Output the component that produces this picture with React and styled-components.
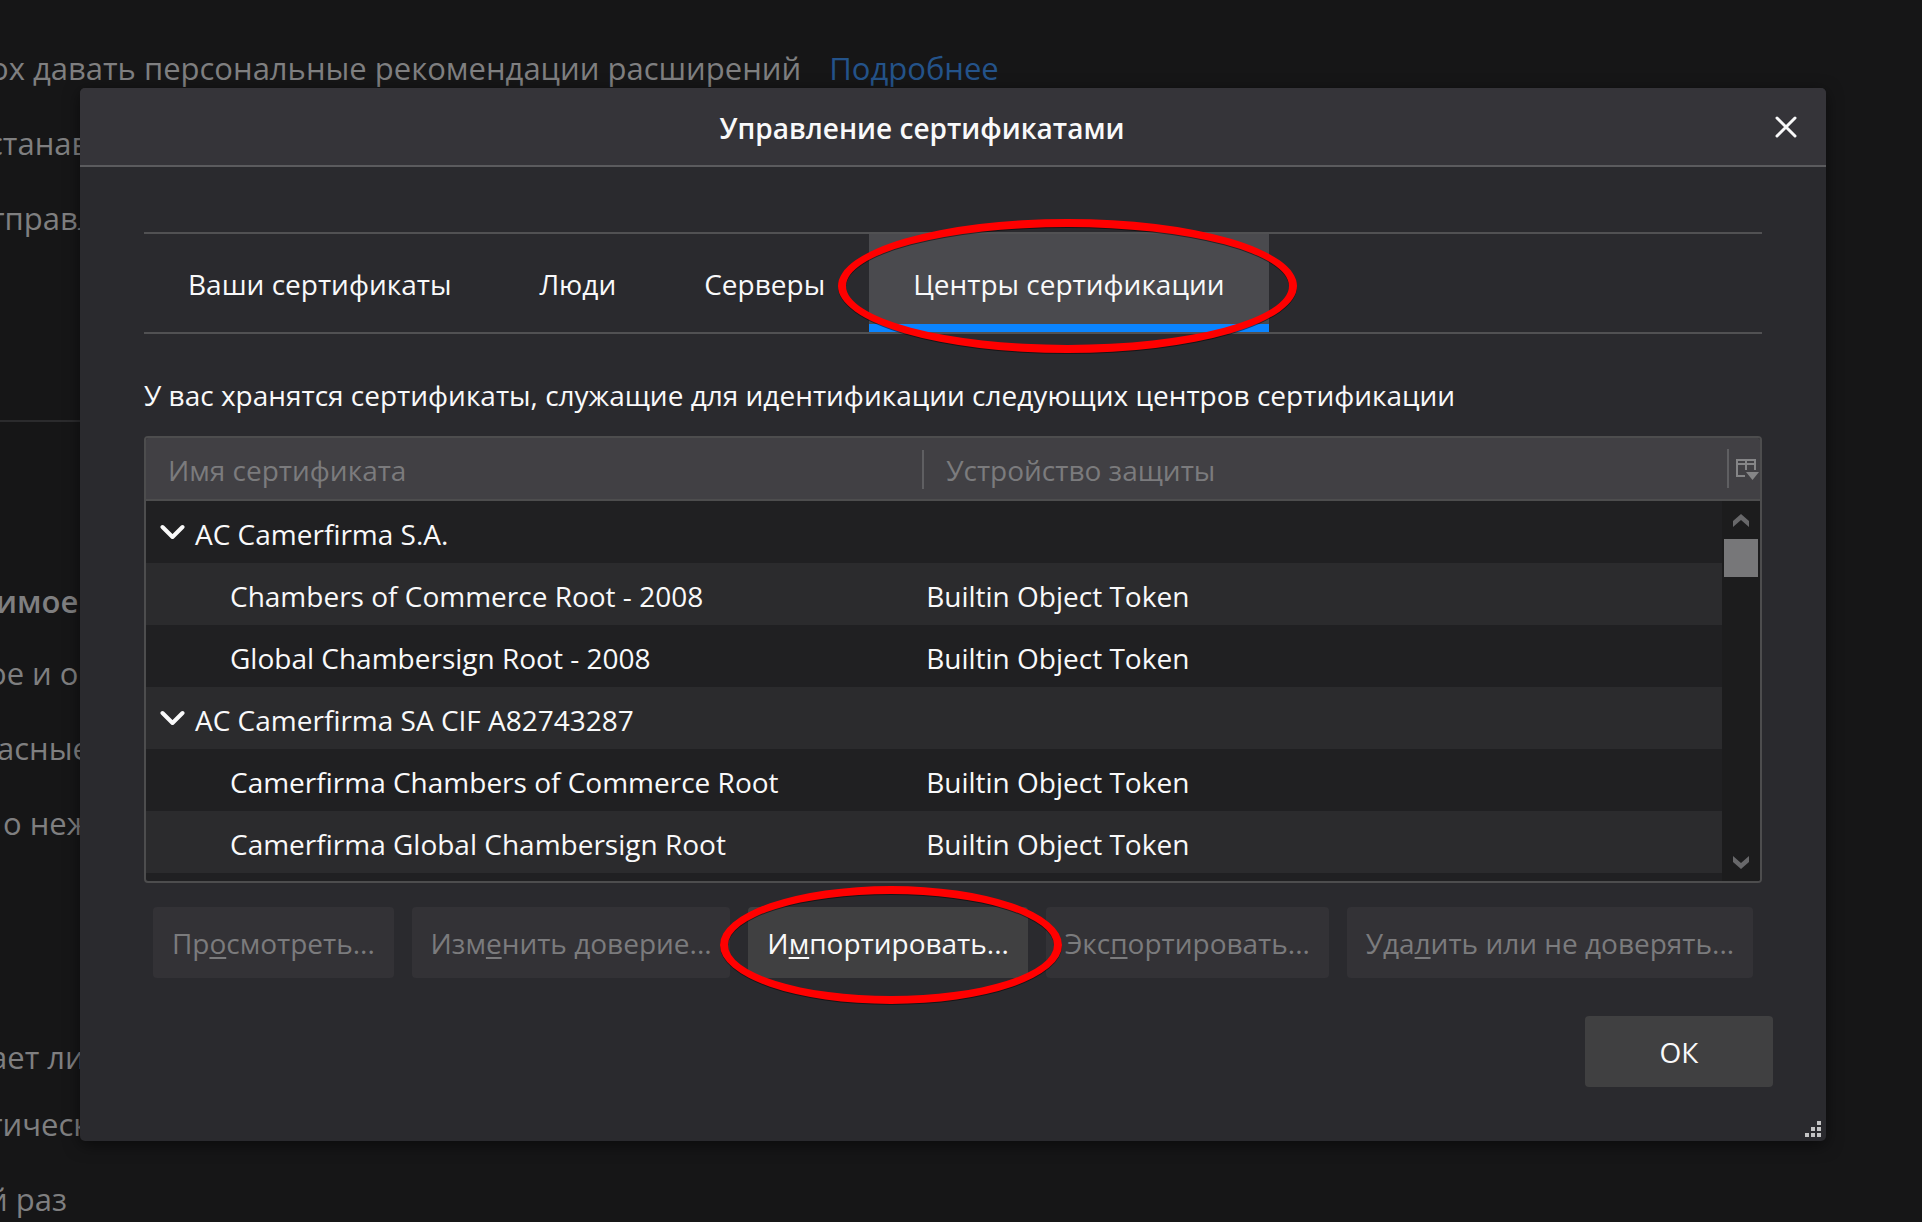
import React from "react";
import styled, { createGlobalStyle, css } from "styled-components";

const GlobalStyle = createGlobalStyle`
  *, *::before, *::after { box-sizing: border-box; }
  body {
    margin: 0;
    background: #161617;
    color: #f9f9fa;
    font: 28px/40px "Segoe UI", "Open Sans", "Noto Sans", sans-serif;
  }
  button { font: inherit; color: inherit; border: 0; padding: 0; background: none; }
`;

const Screen = styled.div`
  display: grid;
  min-height: 100vh;
  overflow: hidden;
`;

/* Preferences page, scrolled sideways behind the dialog */
const Backdrop = styled.div`
  grid-area: 1 / 1;
  width: 90%;
  height: 100vh;
  overflow: hidden;
  padding-top: 45px;
  color: #7f7f80;
  font-size: 31px;
  line-height: 47px;
  white-space: nowrap;
`;

const Group = styled.section`
  display: flex;
  flex-direction: column;
  gap: 28px;
  padding-bottom: ${(p) => p.$after}px;
`;

const Line = styled.p`
  margin: 0;
  margin-left: ${(p) => p.$start}px;
`;

const Heading = styled.h2`
  margin: 0 0 -3px -4px;
  font-size: 31px;
  font-weight: 600;
  line-height: 47px;
`;

const Rule = styled.hr`
  margin: 0 0 156px;
  border: 0;
  border-top: 2px solid #2b2b2d;
`;

const MoreLink = styled.a`
  margin-left: 28px;
  color: #24538a;
  text-decoration: none;
`;

const Overlay = styled.div`
  grid-area: 1 / 1;
  z-index: 1;
  padding: 88px 96px 81px 80px;
`;

const Dialog = styled.section`
  display: flex;
  flex-direction: column;
  border-radius: 5px;
  background: #2a2a2e;
  box-shadow: 0 4px 16px rgba(0, 0, 0, 0.5);
`;

const TitleBar = styled.header`
  display: flex;
  align-items: center;
  height: 79px;
  padding-right: 18px;
  border-bottom: 2px solid #5b5b5e;
  border-radius: 5px 5px 0 0;
  background: #353439;
`;

const Title = styled.h1`
  flex: 1;
  margin: 0;
  padding-top: 2px;
  font-size: 28px;
  font-weight: 600;
  line-height: 40px;
  text-align: center;
`;

const CloseButton = styled.button`
  display: grid;
  place-items: center;
  width: 44px;
  height: 44px;
`;

const Content = styled.div`
  padding: 65px 64px 0;
`;

const TabList = styled.div`
  display: flex;
  border: solid #515153;
  border-width: 2px 0;
`;

const Tab = styled.button`
  position: relative;
  height: 98px;
  padding: 10px 44px 0;
  border-bottom: 8px solid transparent;
  ${(p) => p.$selected && css`
    background: #4a4a4e;
    border-bottom-color: #0a84ff;
  `}
`;

const Mark = styled.span`
  position: absolute;
  z-index: 2;
  inset: ${(p) => p.$inset};
  border: 8px solid #ff0000;
  border-radius: 50%;
  filter: drop-shadow(0 1px 0 rgba(0, 0, 0, 0.5));
  pointer-events: none;
`;

const Description = styled.p`
  margin: 41px 0 21px;
`;

const Tree = styled.div`
  display: grid;
  grid-template-columns: 1fr 38px;
  height: 447px;
  overflow: hidden;
  border: 2px solid #4d4d4e;
  border-radius: 4px;
  background: #202022;
`;

const Table = styled.table`
  width: 100%;
  table-layout: fixed;
  border-collapse: separate;
  border-spacing: 0;
  align-self: start;
`;

const headerSurface = css`
  height: 63px;
  border-bottom: 2px solid #4d4d4e;
  background: #414044;
  color: #7b7b7d;
`;

const Divider = styled.span`
  width: 2px;
  height: 39px;
  background: #5f5f62;
`;

const HeadCell = styled.th`
  ${headerSurface}
  width: ${(p) => p.$width || "auto"};
  padding: 0;
  font-weight: 400;
  text-align: left;
`;

const HeadLabel = styled.span`
  display: flex;
  align-items: center;
  gap: 22px;
  padding-top: 2px;
  padding-left: ${(p) => (p.$first ? 22 : 0)}px;
`;

const Row = styled.tr`
  height: 62px;
  &:nth-child(even) { background: #2b2b2d; }
`;

const Cell = styled.td`
  padding: 4px 0 0 ${(p) => p.$indent}px;
  white-space: nowrap;
`;

const GroupName = styled.span`
  display: flex;
  align-items: center;
  gap: 10px;
`;

const Side = styled.div`
  display: flex;
  flex-direction: column;
`;

const ColumnPicker = styled.button`
  ${headerSurface}
  display: flex;
  flex: none;
  align-items: center;
  gap: 6px;
  padding-left: 5px;
`;

const ScrollBar = styled.div`
  display: flex;
  flex: 1;
  flex-direction: column;
  background: #1c1c1d;
`;

const ScrollButton = styled.button`
  display: grid;
  place-items: center;
  height: 38px;
`;

const ScrollTrack = styled.div`
  flex: 1;
  padding: 0 2px;
`;

const ScrollThumb = styled.div`
  height: 38px;
  background: #777779;
`;

const Actions = styled.div`
  display: flex;
  gap: 18px;
  padding: 24px 9px 38px;
`;

const Button = styled.button`
  position: relative;
  flex: 1 1 auto;
  height: 71px;
  border-radius: 4px;
  background: #404041;
  white-space: nowrap;
  &:disabled {
    background: #333236;
    color: #7b7b7d;
  }
`;

const Key = styled.u`
  text-decoration-thickness: 2px;
  text-underline-offset: 3px;
`;

const Footer = styled.footer`
  display: flex;
  justify-content: flex-end;
  padding-right: 53px;
`;

const OkButton = styled(Button)`
  flex: none;
  width: 188px;
`;

const GripRow = styled.div`
  display: flex;
  justify-content: flex-end;
  padding: 34px 5px 4px;
  line-height: 0;
`;

const rows = [
  { group: "AC Camerfirma S.A." },
  { name: "Chambers of Commerce Root - 2008" },
  { name: "Global Chambersign Root - 2008" },
  { group: "AC Camerfirma SA CIF A82743287" },
  { name: "Camerfirma Chambers of Commerce Root" },
  { name: "Camerfirma Global Chambersign Root" },
];

const Twisty = () => (
  <svg width="25" height="20" viewBox="0 0 25 20" fill="none" stroke="#f9f9fa" strokeWidth="4" strokeLinecap="round" strokeLinejoin="round" aria-hidden="true">
    <path d="M2.5 3 12.5 13 22.5 3" />
  </svg>
);

const ScrollArrow = ({ down }) => (
  <svg width="16" height="13" viewBox="0 0 16 13" fill="#68686a" aria-hidden="true">
    <path d={down ? "M0 0v6l8 7 8-7V0L8 7z" : "M0 13V7l8-7 8 7v6L8 6z"} />
  </svg>
);

export default function App() {
  return (
    <Screen>
      <GlobalStyle />
      <Backdrop>
        <Group $after={178}>
          <Line $start={-10}>ох давать персональные рекомендации расширений<MoreLink href="#more">Подробнее</MoreLink></Line>
          <Line $start={-12}>станав</Line>
          <Line $start={-10}>тправл</Line>
        </Group>
        <Rule />
        <Group $after={187}>
          <Heading>имое</Heading>
          <Line $start={-12}>ое и о</Line>
          <Line $start={-3}>асные</Line>
          <Line $start={3}>о неж</Line>
        </Group>
        <Group $after={20}>
          <Line $start={-10}>ает ли</Line>
        </Group>
        <Group $after={0}>
          <Line $start={-12}>тическ</Line>
          <Line $start={-12}>й раз</Line>
        </Group>
      </Backdrop>

      <Overlay>
        <Dialog role="dialog" aria-labelledby="dialog-title">
          <TitleBar>
            <Title id="dialog-title">Управление сертификатами</Title>
            <CloseButton type="button" aria-label="Закрыть">
              <svg width="22" height="22" viewBox="0 0 22 22" stroke="#f9f9fa" strokeWidth="3" strokeLinecap="round" aria-hidden="true">
                <path d="M2 2 20 20M20 2 2 20" />
              </svg>
            </CloseButton>
          </TitleBar>

          <Content>
            <TabList role="tablist">
              <Tab type="button" role="tab">Ваши сертификаты</Tab>
              <Tab type="button" role="tab">Люди</Tab>
              <Tab type="button" role="tab">Серверы</Tab>
              <Tab type="button" role="tab" aria-selected="true" $selected>
                Центры сертификации
                <Mark $inset="-15px -28px -29px -31px" />
              </Tab>
            </TabList>

            <Description>У вас хранятся сертификаты, служащие для идентификации следующих центров сертификации</Description>

            <Tree>
              <Table>
                <thead>
                  <tr>
                    <HeadCell scope="col" $width="49.25%">
                      <HeadLabel $first>Имя сертификата</HeadLabel>
                    </HeadCell>
                    <HeadCell scope="col">
                      <HeadLabel><Divider />Устройство защиты</HeadLabel>
                    </HeadCell>
                  </tr>
                </thead>
                <tbody>
                  {rows.map((r) => (
                    <Row key={r.group || r.name}>
                      <Cell $indent={r.group ? 14 : 84}>
                        {r.group ? <GroupName><Twisty />{r.group}</GroupName> : r.name}
                      </Cell>
                      <Cell $indent={4}>{r.name && "Builtin Object Token"}</Cell>
                    </Row>
                  ))}
                </tbody>
              </Table>
              <Side>
                <ColumnPicker type="button" aria-label="Выбор столбцов">
                  <Divider />
                  <svg width="24" height="22" viewBox="0 0 24 22" aria-hidden="true">
                    <path d="M10 18H2V2h18v10M2 6h18M11 2v10" fill="none" stroke="#858587" strokeWidth="2" />
                    <path d="M11 14h13l-6.500 8z" fill="#858587" />
                  </svg>
                </ColumnPicker>
                <ScrollBar>
                  <ScrollButton type="button" aria-label="Вверх"><ScrollArrow /></ScrollButton>
                  <ScrollTrack><ScrollThumb /></ScrollTrack>
                  <ScrollButton type="button" aria-label="Вниз"><ScrollArrow down /></ScrollButton>
                </ScrollBar>
              </Side>
            </Tree>

            <Actions>
              <Button type="button" disabled>Пр<Key>о</Key>смотреть...</Button>
              <Button type="button" disabled>Изм<Key>е</Key>нить доверие...</Button>
              <Button type="button">
                И<Key>м</Key>портировать...
                <Mark $inset="-21px -34px -26px -28px" />
              </Button>
              <Button type="button" disabled>Экс<Key>п</Key>ортировать...</Button>
              <Button type="button" disabled>Уда<Key>л</Key>ить или не доверять...</Button>
            </Actions>
          </Content>

          <Footer>
            <OkButton type="button">ОК</OkButton>
          </Footer>
          <GripRow>
            <svg width="16" height="16" viewBox="0 0 16 16" fill="#c4c4c5" aria-hidden="true">
              <path d="M12 0h4v4h-4zM6 6h4v4H6zM12 6h4v4h-4zM0 12h4v4H0zM6 12h4v4H6zM12 12h4v4h-4z" />
            </svg>
          </GripRow>
        </Dialog>
      </Overlay>
    </Screen>
  );
}
